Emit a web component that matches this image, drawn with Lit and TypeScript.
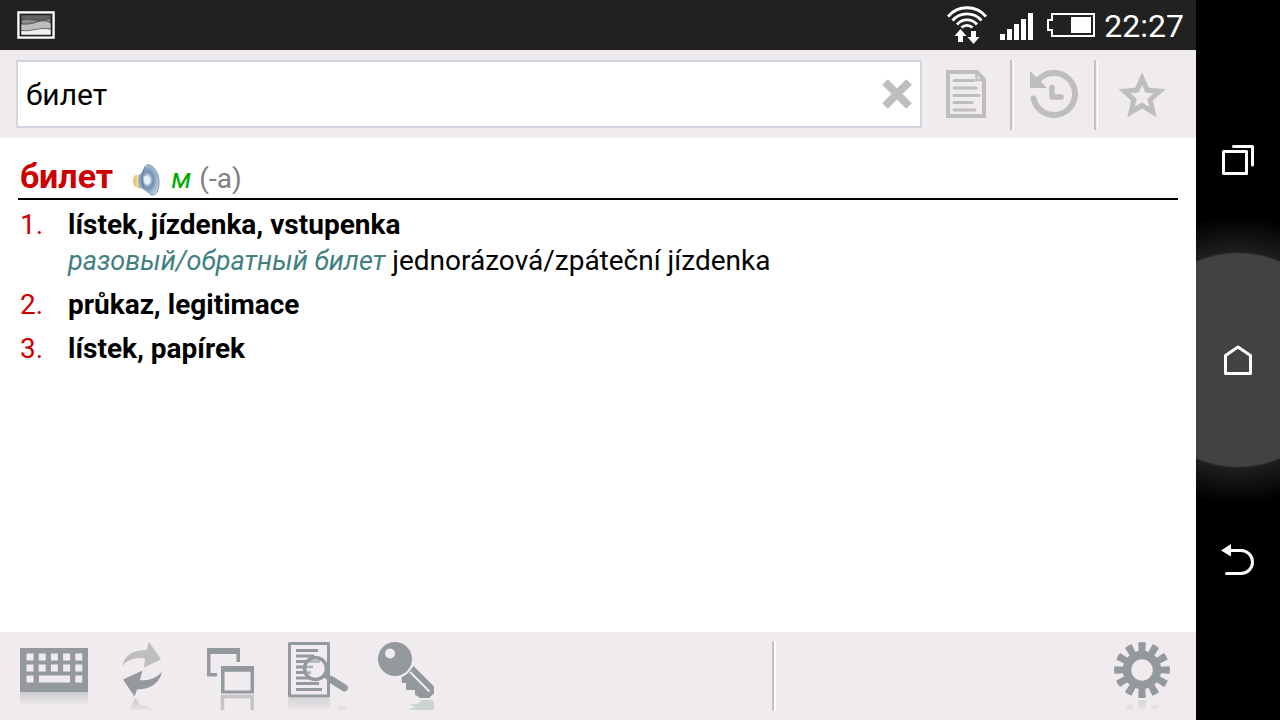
import { LitElement, html, svg, css } from "lit";
import { customElement, property, state } from "lit/decorators.js";

interface Sense {
  translation: string;
  phrase?: string;
  phraseTranslation?: string;
}

const SENSES: Sense[] = [
  {
    translation: "lístek, jízdenka, vstupenka",
    phrase: "разовый/обратный билет",
    phraseTranslation: "jednorázová/zpáteční jízdenka",
  },
  { translation: "průkaz, legitimace" },
  { translation: "lístek, papírek" },
];

@customElement("status-bar")
export class StatusBar extends LitElement {
  static styles = css`
    :host {
      display: flex;
      align-items: center;
      height: 50px;
      padding: 0 12px 0 16px;
      background: #212121;
      color: #fff;
    }
    svg { display: block; flex: none; }
    .spacer { flex: 1; }
    .clock {
      margin-left: 8px;
      font-size: 32px;
      line-height: 48px;
      padding-top: 2px;
      font-weight: 400;
    }
  `;

  render() {
    return html`
      <svg width="40" height="50" viewBox="16 0 40 50" aria-hidden="true">
        <rect x="18.5" y="12.5" width="35" height="25" fill="#212121" stroke="#fff" stroke-width="2.500" />
        <rect x="21.5" y="15.500" width="29" height="19" fill="#8a8a8a" />
        <path d="M21 19.500q8-1 14 0.500t16-2V15H21z" fill="#636363" />
        <path d="M21 24q9 1 16-2t14 1v12H21z" fill="#bdbdbd" />
        <path d="M21 30.500q6 1 14-1t16 0.500V35H21z" fill="#efefef" />
        <path d="M21 19.500q8-1 14 0.500t16-2M21 24q9 1 16-2t14 1M21 30.500q6 1 14-1t16-0.500" fill="none" stroke="#3a3a3a" stroke-width="0.700" />
        <rect x="20.500" y="14.500" width="31" height="21" fill="none" stroke="#212121" stroke-width="1.500" />
      </svg>
      <div class="spacer"></div>
      <svg width="150" height="50" viewBox="946 0 150 50" fill="#fff" aria-hidden="true">
        <g fill="none" stroke="#fff" stroke-width="2.800">
          <path d="M948 16.500a25 25 0 0 1 38 0" />
          <path d="M952.500 20.500a19 19 0 0 1 29 0" />
          <path d="M957 24.500a13 13 0 0 1 20 0" />
          <path d="M961.500 27.500a8 8 0 0 1 11 0" />
        </g>
        <path d="M960.500 29l6 7h-3.500v6h-5v-6h-3.500zM973.500 44l-6-7h3.500v-6h5v6h3.500z" />
        <path d="M1000 34h5v6h-5zM1007 29h5v11h-5zM1014 24h5v16h-5zM1021 19h5v21h-5zM1028 13h5v27h-5z" />
        <path d="M1052 14H1094V36H1052V30H1048V20H1052z" fill="none" stroke="#fff" stroke-width="2" />
        <path d="M1071 17h20v16h-20z" />
      </svg>
      <time class="clock">22:27</time>
    `;
  }
}

@customElement("search-bar")
export class SearchBar extends LitElement {
  @property() query = "";

  static styles = css`
    :host {
      display: flex;
      align-items: center;
      height: 88px;
      padding: 0 10px 0 16px;
      box-sizing: border-box;
      background: #efebee;
    }
    .field {
      display: flex;
      align-items: center;
      flex: 1;
      min-width: 0;
      height: 68px;
      box-sizing: border-box;
      border: 2px solid #d5d5df;
      background: #fff;
    }
    .field input {
      flex: 1;
      min-width: 0;
      height: 64px;
      box-sizing: border-box;
      padding: 0 8px;
      border: 0;
      outline: 0;
      background: none;
      color: #000;
      font: 30px/36px Roboto, "Noto Sans", sans-serif;
    }
    button {
      display: flex;
      align-items: center;
      justify-content: center;
      flex: none;
      height: 70px;
      padding: 0;
      border: 0;
      background: none;
      color: #bebebe;
      cursor: pointer;
    }
    .clear { width: 46px; height: 64px; }
    .side { width: 88px; }
    .middle { width: 80px; }
    .divider {
      width: 4px;
      height: 70px;
      margin-top: 2px;
      box-sizing: border-box;
      border-left: 2px solid #c3c1c3;
      border-right: 1px solid #fff;
    }
  `;

  render() {
    return html`
      <div class="field">
        <input type="text" aria-label="Search" .value=${this.query} />
        <button class="clear" aria-label="Clear">
          <svg width="32" height="32" viewBox="0 0 32 32">
            <path d="M4 4L28 28M28 4L4 28" stroke="currentColor" stroke-width="8" />
          </svg>
        </button>
      </div>
      <button class="side" aria-label="Entry">
        <svg width="48" height="48" viewBox="0 0 48 48" fill="none" stroke="currentColor">
          <path d="M6 2H35L42 9.500V46H6z" stroke-width="4" />
          <path d="M34.500 2V10H42" stroke-width="2.500" />
          <path d="M12 10.500H31.500M12 18H34M12 25.500H37M12 32.500H30M12 40H33" stroke-width="3" stroke-linecap="round" />
        </svg>
      </button>
      <span class="divider"></span>
      <button class="middle" aria-label="History">
        <svg width="48" height="48" viewBox="0 0 48 48" fill="none" stroke="currentColor">
          <path d="M9 9.300A21 21 0 1 1 3.500 28.500" stroke-width="6" stroke-linecap="round" />
          <path d="M0 1V18H17z" fill="currentColor" stroke="none" />
          <path d="M22 17.500V27H31" stroke-width="5.500" stroke-linecap="round" stroke-linejoin="round" />
        </svg>
      </button>
      <span class="divider"></span>
      <button class="side" aria-label="Favourite">
        <svg width="48" height="48" viewBox="0 0 48 48" fill="none" stroke="currentColor">
          <path stroke-width="5"
            d="M24 8.500L29 20.100L41.600 21.300L32.100 29.600L34.900 42L24 35.500L13.100 42L15.900 29.600L6.400 21.300L19 20.100z" />
        </svg>
      </button>
    `;
  }
}

@customElement("dictionary-entry")
export class DictionaryEntry extends LitElement {
  @property() headword = "";
  @property({ attribute: false }) senses: Sense[] = [];

  static styles = css`
    :host {
      display: block;
      flex: 1;
      min-height: 0;
      overflow: hidden;
      padding: 20px 18px 0;
      background: #fff;
      color: #000;
      font-size: 28px;
      line-height: 36px;
    }
    .head {
      display: flex;
      align-items: baseline;
      height: 40px;
      padding: 0 2px;
      border-bottom: 2px solid #000;
    }
    h1 {
      margin: 0;
      color: #cc0000;
      font-size: 34px;
      line-height: 36px;
      font-weight: 700;
    }
    .speak {
      align-self: flex-end;
      height: 36px;
      margin: 0 10px 0 18px;
      padding: 0;
      border: 0;
      background: none;
      cursor: pointer;
    }
    .speak svg { display: block; }
    .gender { color: #00aa00; font-style: italic; }
    .ending { margin-left: 8px; color: #808080; }
    ol {
      display: grid;
      gap: 8px;
      margin: 7px 0 0;
      padding: 0 2px;
      list-style: none;
    }
    li { display: grid; grid-template-columns: 48px 1fr; }
    .num { color: #cc0000; }
    p { margin: 0; }
    .bold { font-weight: 700; }
    .phrase { color: #408080; font-size: 27px; font-style: italic; }
  `;

  render() {
    return html`
      <div class="head">
        <h1>${this.headword}</h1>
        <button class="speak" aria-label="Pronounce">
          <svg width="30" height="34" viewBox="0 0 30 34">
            <defs>
              <radialGradient id="cone" cx="0.450" cy="0.500" r="0.600">
                <stop offset="0" stop-color="#f4f8fc" />
                <stop offset="0.220" stop-color="#c0d0e0" />
                <stop offset="0.450" stop-color="#7490b0" />
                <stop offset="0.700" stop-color="#9db4cc" />
                <stop offset="1" stop-color="#c4d4e4" />
              </radialGradient>
              <linearGradient id="base" x1="0" x2="1">
                <stop offset="0" stop-color="#e0b050" />
                <stop offset="0.500" stop-color="#f8dc98" />
                <stop offset="1" stop-color="#b88838" />
              </linearGradient>
            </defs>
            <path d="M3 13Q6 11 11 12V25Q6 26 3 22.500Q1.500 18 3 13z" fill="url(#base)" />
            <path d="M16 1.500Q23 1.500 27 12Q29.500 22 26 29.500Q22 34 18 31Q13 26 9 25Q5.500 18 8 12Q11 10 13 4.500Q14 2 16 1.500z" fill="url(#cone)" />
            <path d="M14 4Q9 14 13 25" fill="none" stroke="#5d7898" stroke-width="1.200" opacity="0.700" />
            <path d="M16 1.500Q23 1.500 27 12Q29.500 22 26 29.500Q23 33.500 19 31.500" fill="none" stroke="#8196ad" stroke-width="1" />
            <ellipse cx="16" cy="17" rx="3.200" ry="4.500" fill="#e8eff6" transform="rotate(-12 16 17)" />
          </svg>
        </button>
        <span class="gender">м</span>
        <span class="ending">(-а)</span>
      </div>
      <ol>
        ${this.senses.map(
          (s, i) => html`
            <li>
              <span class="num">${i + 1}.</span>
              <div>
                <p class="bold">${s.translation}</p>
                ${s.phrase
                  ? html`<p><span class="phrase">${s.phrase}</span> ${s.phraseTranslation}</p>`
                  : null}
              </div>
            </li>
          `
        )}
      </ol>
    `;
  }
}

const KEYS = [0, 1, 2, 3, 4].flatMap((c) => [0, 1].map((r) => ({ x: 16.5 + c * 12.2, y: 21.5 + r * 11 })));

const GEAR_TEETH = Array.from({ length: 12 }, (_, i) => i * 30);

@customElement("tool-bar")
export class ToolBar extends LitElement {
  static styles = css`
    :host {
      display: flex;
      align-items: center;
      height: 88px;
      padding: 0 10px;
      background: #efebee;
    }
    button {
      flex: none;
      width: 88px;
      height: 88px;
      padding: 0;
      border: 0;
      background: none;
      color: #949a9c;
      cursor: pointer;
    }
    svg { display: block; }
    .divider {
      width: 4px;
      height: 70px;
      margin: 0 auto;
      box-sizing: border-box;
      border-left: 2px solid #c3c1c3;
      border-right: 2px solid #fff;
    }
  `;

  private icon(label: string, body: unknown) {
    return html`
      <button aria-label=${label}>
        <svg width="88" height="88" viewBox="0 0 88 88" fill="currentColor">
          <defs>
            <linearGradient id="fade" gradientUnits="userSpaceOnUse" x1="0" y1="60" x2="0" y2="74">
              <stop offset="0" stop-color="#949a9c" stop-opacity="0.400" />
              <stop offset="1" stop-color="#949a9c" stop-opacity="0" />
            </linearGradient>
            <linearGradient id="low-fade" gradientUnits="userSpaceOnUse" x1="0" y1="66" x2="0" y2="79">
              <stop offset="0" stop-color="#949a9c" stop-opacity="0.450" />
              <stop offset="1" stop-color="#949a9c" stop-opacity="0.050" />
            </linearGradient>
          </defs>
          ${body}
        </svg>
      </button>
    `;
  }

  render() {
    return html`
      ${this.icon(
        "Keyboard",
        svg`
          <path d="M10 60H78V74H10z" fill="url(#fade)" />
          <path d="M10 16H78V60H10z" />
          <g fill="#efebee">
            ${KEYS.map((k) => svg`<rect x=${k.x} y=${k.y} width="7" height="7" />`)}
            <path d="M16.500 43.500h7v7h-7zM29 43.500h31v7h-31zM65.300 43.500h7v7h-7z" />
          </g>`
      )}
      ${this.icon(
        "Swap languages",
        svg`
          <path d="M37 66L43 73.500Q50 73 56 78H30L33 75z" fill="url(#low-fade)" />
          <path d="M24 34Q28 18 48.500 18L51 10L63 27.300L46 35.500L47 26.500Q33 24 24 34z" fill="#bebebe" />
          <path d="M64 40Q60 57 39 57.500L36.500 64.500L25 47.500L44.500 38.500L42 48Q54 50 64 40z" />`
      )}
      ${this.icon(
        "Windows",
        svg`
          <path d="M36.500 78V64.500H66.200V78" fill="none" stroke="#c4c4c6" stroke-width="3.500" />
          <path d="M21 16H54V30H50.500V22H24.500V41H31V44.500H21z" />
          <path d="M35 34H68V61.500H35zM38.500 39.800V58.500H64.500V39.800z" fill-rule="evenodd" />`
      )}
      ${this.icon(
        "Full-text search",
        svg`
          <path d="M14 66H56V78H14z" fill="url(#low-fade)" opacity="0.600" />
          <path d="M65 74H71L74 78H62z" fill="url(#low-fade)" />
          <path d="M15.500 11.500H54.500V64H15.500z" fill="none" stroke="currentColor" stroke-width="3" stroke-linejoin="round" />
          <path d="M22 18.500H44M22 24H40M22 29.500H44M22 35H32M22 40.500H31M22 46H36M22 51.500H45M22 57.500H48" stroke="currentColor" stroke-width="3" />
          <circle cx="41.500" cy="36.500" r="11" fill="#efebee" stroke="currentColor" stroke-width="3.500" />
          <path d="M33 29.500H46M32 35H39M32 40.500H37" stroke="currentColor" stroke-width="2.500" opacity="0.700" />
          <path d="M51 43.500L70 56" stroke="currentColor" stroke-width="5" />
          <path d="M57 47.500L70.500 56" stroke="currentColor" stroke-width="7" stroke-linecap="round" />`
      )}
      ${this.icon(
        "Activation key",
        svg`
          <path d="M46 78L53 75L48 72H55L60 68H70L72 70V78z" fill="#ccd4d4" />
          <path d="M33 10a17 17 0 1 1 0 34a17 17 0 1 1 0-34zM28 16.500a5 5 0 1 0 0.100 0z" fill-rule="evenodd" />
          <path d="M51.500 34L72 54.500V61.500L67 66H58L53 62.500V58H44V51H39.700V45Q46 43 51.500 34z" />
          <path d="M48 40L67.500 59.500" stroke="#efebee" stroke-width="2" />`
      )}
      <span class="divider"></span>
      ${this.icon(
        "Settings",
        svg`
          <path d="M28 73H35V78H28zM40 68H48V78H40zM53 73H60V78H53z" fill="url(#low-fade)" opacity="0.700" />
          <circle cx="44" cy="38" r="15" fill="none" stroke="currentColor" stroke-width="8.500" />
          ${GEAR_TEETH.map(
            (a) => svg`<path d="M40.200 10.500Q44 9.500 47.800 10.500L47.300 21H40.700z" transform="rotate(${a} 44 38)" />`
          )}`
      )}
    `;
  }
}

@customElement("nav-rail")
export class NavRail extends LitElement {
  static styles = css`
    :host {
      display: flex;
      flex-direction: column;
      align-items: center;
      justify-content: center;
      background: radial-gradient(
        circle at center,
        #424242 106px,
        #1c1f1e 108px,
        #111312 122px,
        #000 144px
      );
    }
    button {
      display: flex;
      align-items: center;
      justify-content: center;
      width: 84px;
      height: 200px;
      padding: 0;
      border: 0;
      background: none;
      color: #fff;
      cursor: pointer;
    }
  `;

  render() {
    return html`
      <button aria-label="Recent apps">
        <svg width="36" height="36" viewBox="0 0 36 36" fill="none" stroke="currentColor" stroke-width="3" stroke-linejoin="round" stroke-linecap="round">
          <path d="M3.500 9.500H26.500V31.500H3.500z" />
          <path d="M13.500 4.500H32.500V23" />
        </svg>
      </button>
      <button aria-label="Home">
        <svg width="36" height="36" viewBox="0 0 36 36" fill="none" stroke="currentColor" stroke-width="3" stroke-linejoin="round">
          <path d="M18 5L30.500 13.500V31.500H5.500V13.500z" />
        </svg>
      </button>
      <button aria-label="Back">
        <svg width="36" height="36" viewBox="0 0 36 36" fill="none" stroke="currentColor" stroke-width="3" stroke-linecap="round">
          <path d="M10 8.500H21A11.500 11.500 0 0 1 21 31.500H6.500" />
          <path d="M1 8.500L11 2V14.500z" fill="currentColor" stroke="none" />
        </svg>
      </button>
    `;
  }
}

@customElement("app-root")
export class AppRoot extends LitElement {
  @state() private word = "билет";

  static styles = css`
    :host {
      display: grid;
      grid-template-columns: 1fr 84px;
      height: 100vh;
      background: #000;
      font-family: Roboto, "Noto Sans", sans-serif;
    }
    main {
      display: flex;
      flex-direction: column;
      min-width: 0;
      min-height: 0;
    }
  `;

  render() {
    return html`
      <main>
        <status-bar></status-bar>
        <search-bar .query=${this.word}></search-bar>
        <dictionary-entry .headword=${this.word} .senses=${SENSES}></dictionary-entry>
        <tool-bar></tool-bar>
      </main>
      <nav-rail></nav-rail>
    `;
  }
}
